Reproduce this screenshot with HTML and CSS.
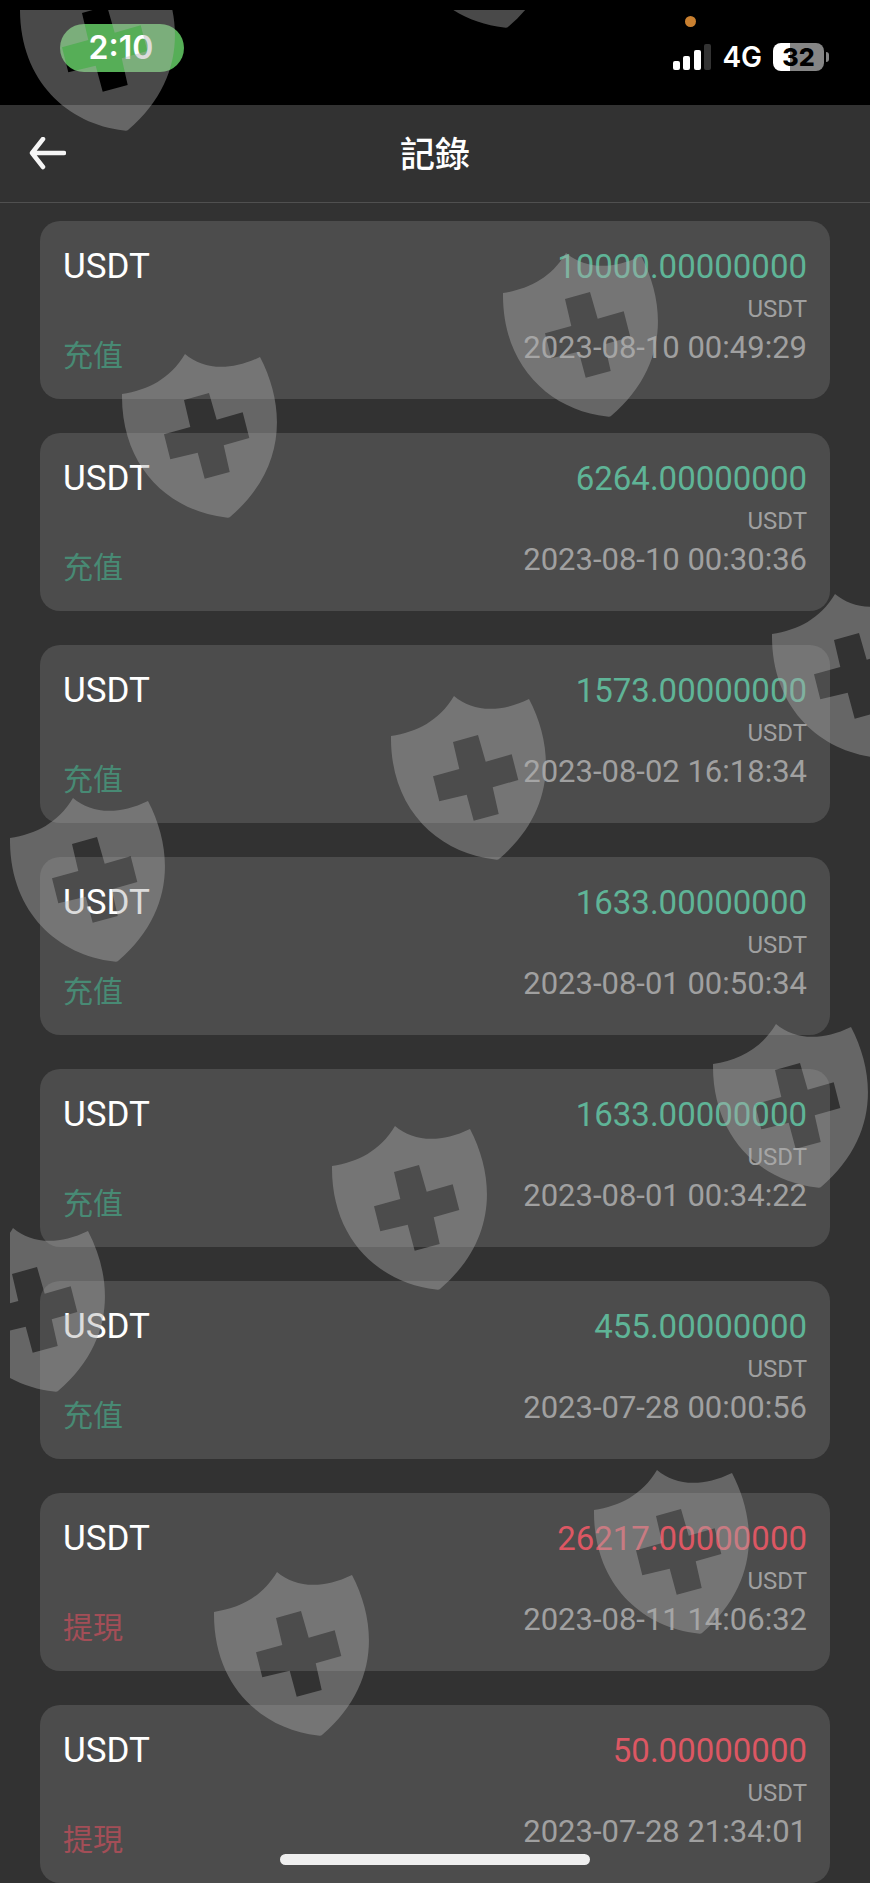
FILE: index.html
```html
<!DOCTYPE html>
<html lang="zh-Hant">
<head>
    <meta charset="UTF-8">
    <meta name="viewport" content="width=device-width, initial-scale=1.0">
    <title>記錄</title>
    <link rel="stylesheet" href="styles.css">
</head>
<body>
    <div class="status-bar">
        <span class="clock">2:10</span>
        <span class="mic-dot"></span>
        <div class="status-icons">
            <svg class="signal" viewBox="0 0 38 26" width="38" height="26">
                <rect x="0" y="17" width="7" height="9" rx="2" fill="#fff"/>
                <rect x="10" y="12" width="7" height="14" rx="2" fill="#fff"/>
                <rect x="21" y="6" width="7" height="20" rx="2" fill="#fff"/>
                <rect x="31" y="0" width="7" height="26" rx="2" fill="#333"/>
            </svg>
            <span class="network">4G</span>
            <div class="battery"><span>32</span></div>
        </div>
    </div>

    <header class="header">
        <button class="back" aria-label="返回">
            <svg viewBox="0 0 38 34" width="38" height="34">
                <path d="M15 2 L4 16 L15 30 M4 16 H36" fill="none" stroke="#f5f5f5" stroke-width="4.500" stroke-linecap="round" stroke-linejoin="round"/>
            </svg>
        </button>
        <h1>記錄</h1>
    </header>

    <main class="record-list" id="record-list"></main>

    <svg class="watermark" aria-hidden="true">
        <defs>
            <path id="shield" fill-rule="evenodd" d="M1 40 C27 36 49 25 64 0 C82 15 108 18 139 3 C166 55 164 116 109 163 Q108 164 105 163.500 C48 157 0 113 1 40 Z
                M63 46 L88 39 L95.700 65.700 L121.700 58.300 L128.300 84 L102.700 91.300 L108.700 118 L83.700 124.700 L76.700 98.700 L49.300 105.300 L43 80.300 L69.300 73 Z"/>
        </defs>
        <g transform="translate(-10 -10)">
            <use href="#shield" x="19" y="-33"/>
            <use href="#shield" x="399" y="-136"/>
            <use href="#shield" x="502" y="253"/>
            <use href="#shield" x="121" y="354"/>
            <use href="#shield" x="771" y="594"/>
            <use href="#shield" x="390" y="696"/>
            <use href="#shield" x="9" y="798"/>
            <use href="#shield" x="712" y="1024"/>
            <use href="#shield" x="331" y="1126"/>
            <use href="#shield" x="-51" y="1228"/>
            <use href="#shield" x="593" y="1470"/>
            <use href="#shield" x="213" y="1572"/>
        </g>
    </svg>

    <div class="home-indicator"></div>

    <script src="script.js"></script>
</body>
</html>
```
FILE: styles.css
```css
* {
    box-sizing: border-box;
}

body {
    position: relative;
    margin: 0;
    background-color: #323232;
    color: #fff;
    font-family: Roboto, "Noto Sans CJK TC", sans-serif;
}

.status-bar {
    position: relative;
    display: flex;
    justify-content: space-between;
    align-items: flex-start;
    height: 105px;
    padding: 24px 41px 0 60px;
    background-color: #000;
    font-family: Inter, sans-serif;
}

.clock {
    width: 124px;
    padding-right: 2px;
    border-radius: 24px;
    background-color: #56ae57;
    font-size: 32px;
    font-weight: 600;
    line-height: 48px;
    text-align: center;
}

.mic-dot {
    position: absolute;
    top: 16px;
    right: 174px;
    width: 11px;
    height: 11px;
    border-radius: 50%;
    background-color: #c98030;
}

.status-icons {
    display: flex;
    align-items: center;
    gap: 11px;
    margin-top: 17px;
}

.network {
    font-size: 28px;
    font-weight: 600;
    line-height: 32px;
}

.battery {
    position: relative;
    width: 51px;
    height: 28px;
    margin-right: 5px;
    border-radius: 8px;
    background: linear-gradient(to right, #fff 33%, #858585 33%);
    color: #000;
    font-size: 25px;
    font-weight: 800;
    line-height: 28px;
    text-align: center;
}

.battery::after {
    content: "";
    position: absolute;
    top: 9px;
    right: -5px;
    width: 3px;
    height: 10px;
    border-radius: 0 4px 4px 0;
    background-color: #858585;
}

.header {
    display: grid;
    grid-template-columns: 1fr auto 1fr;
    align-items: center;
    height: 98px;
    padding: 0 28px;
    border-bottom: 1px solid #505050;
}

.header h1 {
    margin: 0;
    padding-top: 4px;
    font-size: 35px;
    font-weight: 500;
    line-height: 50px;
}

.back {
    display: flex;
    justify-self: start;
    padding: 0;
    border: none;
    background: none;
    cursor: pointer;
}

.record-list {
    display: flex;
    flex-direction: column;
    gap: 34px;
    padding: 18px 40px 0;
}

.record {
    display: flex;
    justify-content: space-between;
    padding: 23px;
    border-radius: 20px;
    background-color: #4c4c4c;
}

.record-left,
.record-right {
    display: flex;
    flex-direction: column;
}

.record-left {
    justify-content: space-between;
}

.record-right {
    min-height: 132px;
    text-align: right;
}

.coin,
.amount {
    line-height: 46px;
}

.coin {
    font-size: 35px;
}

.amount {
    font-size: 33px;
}

.type {
    font-size: 30px;
    line-height: 40px;
}

.unit,
.time {
    color: #a0a0a0;
}

.unit {
    font-size: 24px;
    line-height: 38px;
}

.time {
    font-size: 31px;
    line-height: 40px;
}

.deposit .amount {
    color: #5fb497;
}

.deposit .type {
    color: #488a74;
}

.withdraw .amount {
    color: #dc5763;
}

.withdraw .type {
    color: #a34e57;
}

.watermark {
    position: absolute;
    top: 10px;
    left: 10px;
    width: calc(100% - 10px);
    height: calc(100% - 10px);
    overflow: hidden;
    fill: #aeaeae;
    opacity: 0.42;
    pointer-events: none;
}

.home-indicator {
    position: fixed;
    bottom: 18px;
    left: 50%;
    width: 310px;
    height: 11px;
    border-radius: 6px;
    background-color: #efefef;
    transform: translateX(-50%);
}
```
FILE: script.js
```js
const records = [
    { type: 'deposit', amount: '10000.00000000', time: '2023-08-10 00:49:29' },
    { type: 'deposit', amount: '6264.00000000', time: '2023-08-10 00:30:36' },
    { type: 'deposit', amount: '1573.00000000', time: '2023-08-02 16:18:34' },
    { type: 'deposit', amount: '1633.00000000', time: '2023-08-01 00:50:34' },
    { type: 'deposit', amount: '1633.00000000', time: '2023-08-01 00:34:22' },
    { type: 'deposit', amount: '455.00000000', time: '2023-07-28 00:00:56' },
    { type: 'withdraw', amount: '26217.00000000', time: '2023-08-11 14:06:32' },
    { type: 'withdraw', amount: '50.00000000', time: '2023-07-28 21:34:01' }
];

const labels = { deposit: '充值', withdraw: '提現' };

function renderRecords() {
    const list = document.getElementById('record-list');

    records.forEach(record => {
        const card = document.createElement('section');
        card.className = `record ${record.type}`;

        card.innerHTML = `
            <div class="record-left">
                <span class="coin">USDT</span>
                <span class="type">${labels[record.type]}</span>
            </div>
            <div class="record-right">
                <span class="amount">${record.amount}</span>
                <span class="unit">USDT</span>
                <span class="time">${record.time}</span>
            </div>
        `;

        list.appendChild(card);
    });
}

renderRecords();
```
